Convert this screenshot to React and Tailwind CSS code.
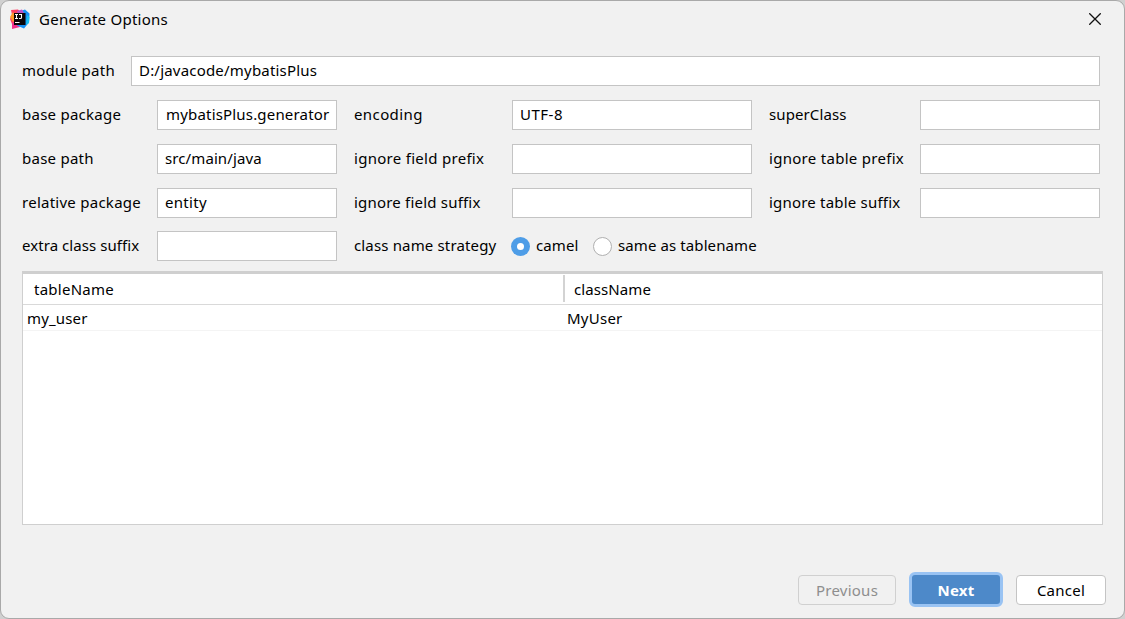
import { useState } from "react";

const tables = [{ tableName: "my_user", className: "MyUser" }];

function IdeaLogo() {
  return (
    <svg width="20" height="20" viewBox="0 0 20 20" className="shrink-0">
      <path d="M1 1 8 .5l4 4-4 12-5.500 3L2 15 0 10l2-4z" fill="#ff3d64" />
      <path d="M0 8l3-5 4 6-4 4z" fill="#ff9a2b" />
      <path d="M2 14l5-2 3 6-8 2z" fill="#f0308c" />
      <path d="M8 3l7-2.500 4.500 4-.5 9-5 6-7-3z" fill="#1690f5" />
      <path d="M17 6l2.500 2-.5 6-3 2z" fill="#18bdf0" />
      <path d="M7 2l5-1.500 2 3.500-6 2z" fill="#b94fc9" />
      <rect x="4" y="4" width="11.500" height="12" fill="#0b0508" />
      <path d="M5 5.500h3M6.500 5.500v4M5 9.500h3M9 5.500h2.500v3q0 1-1 1H9M5 13.500h4.500" stroke="#fff" strokeWidth="1.100" fill="none" />
    </svg>
  );
}

function Label({ children, className = "" }) {
  return <label className={`whitespace-nowrap pb-[2px] ${className}`}>{children}</label>;
}

function Field({ value = "", className = "pl-[7px]" }) {
  const [text, setText] = useState(value);
  return (
    <input
      value={text}
      onChange={(e) => setText(e.target.value)}
      className={`h-[30px] min-w-0 w-full border border-[#c4c4c4] bg-white pb-[2px] outline-none ${className}`}
    />
  );
}

function Radio({ checked, children, onSelect }) {
  return (
    <button onClick={onSelect} className="flex items-center whitespace-nowrap">
      <span
        className={`mr-[6px] flex size-[19px] items-center justify-center rounded-full ${
          checked ? "bg-[#4e9de7]" : "border border-[#b0b0b0] bg-white"
        }`}
      >
        {checked && <span className="size-[7px] rounded-full bg-white" />}
      </span>
      <span className="pb-[2px] tracking-[0.1px]">{children}</span>
    </button>
  );
}

export default function App() {
  const [strategy, setStrategy] = useState("camel");

  return (
    <div className="h-[619px] w-[1125px] bg-[#d0d0d0] font-['Noto_Sans','Open_Sans',sans-serif] text-[15px] leading-5 tracking-[0.25px] text-black">
      <div className="flex h-full flex-col rounded-[9px] border border-[#a9a9a9] bg-[#f1f1f1]">
        <header className="flex h-9 shrink-0 items-center pr-[23px] pl-[9px]">
          <IdeaLogo />
          <span className="ml-[9px]">Generate Options</span>
          <button className="ml-auto">
            <svg width="12" height="12" viewBox="0 0 12 12" stroke="#111" strokeWidth="1.300">
              <path d="M.3.3l11.400 11.400M11.700.3l-11.400 11.400" />
            </svg>
          </button>
        </header>

        <main className="pt-[19px] pr-[21px] pl-[21px]">
          <div className="flex items-center pr-[3px]">
            <Label className="w-[109px] shrink-0">module path</Label>
            <Field value="D:/javacode/mybatisPlus" className="pl-[7px] tracking-[0.2px]" />
          </div>

          <div className="mt-[14px] grid grid-cols-[135px_180px_175px_240px_168px_180px] items-center gap-y-[14px]">
            <Label>base package</Label>
            <Field value="mybatisPlus.generator" className="pl-[8px] tracking-[0.18px]" />
            <Label className="pl-[17px] tracking-[0.4px]">encoding</Label>
            <Field value="UTF-8" className="pl-[7px] tracking-[0.5px]" />
            <Label className="pl-[17px] tracking-[0.1px]">superClass</Label>
            <Field />

            <Label>base path</Label>
            <Field value="src/main/java" className="pl-[7px] tracking-[0.1px]" />
            <Label className="pl-[17px] tracking-[0.29px]">ignore field prefix</Label>
            <Field />
            <Label className="pl-[17px] tracking-[0.29px]">ignore table prefix</Label>
            <Field />

            <Label className="tracking-[0.26px]">relative package</Label>
            <Field value="entity" className="pl-[7px] tracking-[0.3px]" />
            <Label className="pl-[17px] tracking-[0.2px]">ignore field suffix</Label>
            <Field />
            <Label className="pl-[17px] tracking-[0.2px]">ignore table suffix</Label>
            <Field />
          </div>

          <div className="mt-[13px] grid grid-cols-[135px_180px_174px_82px_auto] items-center">
            <Label className="tracking-[0.06px]">extra class suffix</Label>
            <Field />
            <Label className="pl-[17px] tracking-[0.15px]">class name strategy</Label>
            <Radio checked={strategy === "camel"} onSelect={() => setStrategy("camel")}>
              camel
            </Radio>
            <Radio checked={strategy === "table"} onSelect={() => setStrategy("table")}>
              same as tablename
            </Radio>
          </div>

          <div className="mt-[10px] h-[254px] border border-t-[3px] border-[#cfcfcf] bg-white">
            <div className="flex h-[31px] items-center border-b border-[#d9d9d9]">
              <span className="w-[540px] pl-[11px]">tableName</span>
              <span className="mb-px h-[27px] w-[2px] bg-[#d3d3d3]" />
              <span className="pl-[9px] tracking-[0.1px]">className</span>
            </div>
            {tables.map((row) => (
              <div key={row.tableName} className="flex h-[26px] items-center border-b border-[#f4f4f4]">
                <span className="w-[540px] pl-[4px] tracking-[0.15px]">{row.tableName}</span>
                <span className="pl-[4px]">{row.className}</span>
              </div>
            ))}
          </div>
        </main>

        <footer className="mt-auto flex items-center justify-end pr-[18px] pb-[11px]">
          <button className="h-[30px] w-[98px] rounded-[4px] border border-[#d0d0d0] text-[#8e8e8e]">Previous</button>
          <button className="ml-[13px] h-[35px] w-[94px] rounded-[6px] border-[3px] border-[#99c3f3] bg-[#4d89c9] font-bold text-white">
            Next
          </button>
          <button className="ml-[13px] h-[30px] w-[90px] rounded-[4px] border border-[#c4c4c4] bg-white">Cancel</button>
        </footer>
      </div>
    </div>
  );
}
